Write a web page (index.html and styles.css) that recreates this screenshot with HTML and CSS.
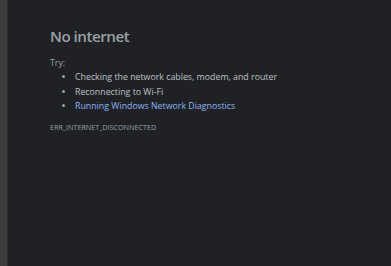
FILE: index.html
```html
<!DOCTYPE html>
<html>
<head>
<meta charset="utf-8">
<link rel="stylesheet" href="styles.css">
</head>
<body>
<div class="frame">
  <div class="strip"></div>
  <main class="page">
    <h1 class="title">No internet</h1>
    <p class="try">Try:</p>
    <ul class="tips">
      <li>Checking the network cables, modem, and router</li>
      <li>Reconnecting to Wi-Fi</li>
      <li><a class="link" href="#">Running Windows Network Diagnostics</a></li>
    </ul>
    <div class="code">ERR_INTERNET_DISCONNECTED</div>
  </main>
</div>
</body>
</html>
```

FILE: styles.css
```css
html, body {
  margin: 0;
  padding: 0;
  height: 100%;
  background: #202124;
}
.frame {
  display: flex;
  height: 100%;
}
.strip {
  width: 7px;
  background: #3b3b3b;
  border-right: 1px solid #2c2c2c;
  flex: none;
}
.page {
  flex: 1;
  padding: 26px 0 0 42px;
  font-family: "Open Sans", "Noto Sans", sans-serif;
  color: #bdc1c6;
}
.title {
  margin: 0;
  font-family: "Open Sans", sans-serif;
  font-size: 15.2px;
  font-weight: 600;
  letter-spacing: -0.5px;
  color: #9aa0a6;
  line-height: 20px;
}
.try {
  margin: 10px 0 0 0;
  font-size: 8.8px;
  line-height: 14px;
  color: #9aa0a6;
}
.tips {
  margin: 0;
  padding: 0 0 0 25px;
  font-size: 8.8px;
  line-height: 14.5px;
  color: #bdc1c6;
}
.tips li::marker {
  color: #9aa0a6;
}
.link {
  color: #8ab4f8;
  text-decoration: none;
}
.code {
  margin-top: 8px;
  font-size: 7.2px;
  color: #9aa0a6;
  line-height: 10px;
}
```
